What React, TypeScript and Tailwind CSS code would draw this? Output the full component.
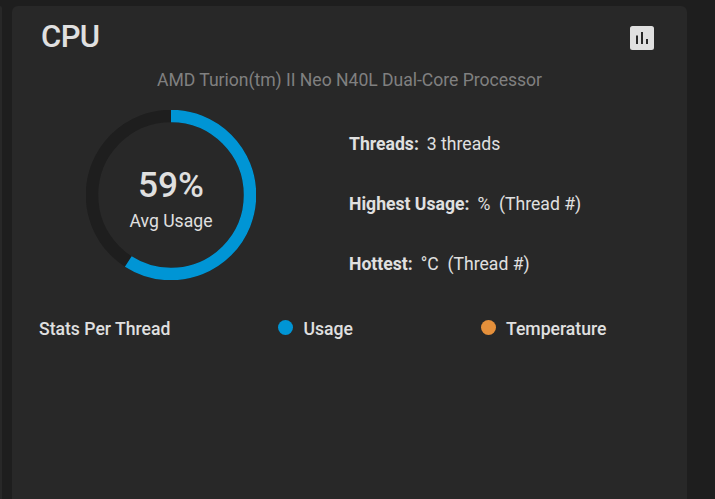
const AVG_USAGE = 59;
const RADIUS = 79;
const CIRCUMFERENCE = 2 * Math.PI * RADIUS;

const STATS = [
  { label: "Threads:", value: "3 threads" },
  { label: "Highest Usage:", value: "%\u00a0 (Thread #)" },
  { label: "Hottest:", value: "°C\u00a0 (Thread #)" },
];

export default function App() {
  return (
    <main className="flex h-screen gap-[10px] overflow-hidden bg-[#1e1e1e] pt-[6px] font-['Roboto',sans-serif] text-[#e0e0e0]">
      {/* Edge of the neighbouring card */}
      <div className="h-[600px] w-0.5 shrink-0 rounded-tr-sm bg-[#282828]" />
      <section className="h-[600px] w-[675px] shrink-0 rounded-md bg-[#282828]">
        {/* Header */}
        <header className="flex h-[60px] items-center justify-between px-[29px]">
          <h1 className="pt-0.5 text-[31px] leading-[46px] font-medium tracking-[-0.6px]">CPU</h1>
          <svg viewBox="0 0 32 32" className="mt-1 size-8" fill="currentColor" fillRule="evenodd">
            <path d="M6.5 4h19A2.5 2.5 0 0 1 28 6.5v19a2.5 2.5 0 0 1-2.5 2.5h-19A2.5 2.5 0 0 1 4 25.5v-19A2.5 2.5 0 0 1 6.5 4zM10 13.5V22h2v-8.5zM15 10v12h2V10zM20 17v5h2v-5z" />
          </svg>
        </header>
        <p className="text-center text-[17.6px] leading-7 tracking-[-0.03px] text-[#808080]">AMD Turion(tm) II Neo N40L Dual-Core Processor</p>

        {/* Usage ring and figures */}
        <div className="mt-4 flex pl-[74px]">
          <div className="grid size-[170px] place-items-center">
            <svg viewBox="0 0 170 170" className="col-start-1 row-start-1 size-full -rotate-90" fill="none" strokeWidth="12.5">
              <circle cx="85" cy="85" r={RADIUS} stroke="#1e1e1e" />
              <circle
                cx="85"
                cy="85"
                r={RADIUS}
                stroke="#0095d5"
                strokeDasharray={`${(CIRCUMFERENCE * AVG_USAGE) / 100} ${CIRCUMFERENCE}`}
              />
            </svg>
            <div className="col-start-1 row-start-1 pt-[10px] text-center">
              <div className="text-[35.2px] leading-[42px] font-medium">{AVG_USAGE}%</div>
              <div className="text-[17.6px] leading-[30px]">Avg Usage</div>
            </div>
          </div>
          <dl className="ml-[93px] flex flex-col gap-8 pt-5 text-[17.6px] leading-7">
            {STATS.map((stat) => (
              <div key={stat.label} className="flex gap-2">
                <dt className="font-bold">{stat.label}</dt>
                <dd>{stat.value}</dd>
              </div>
            ))}
          </dl>
        </div>

        {/* Legend */}
        <div className="mt-[35px] flex items-center pl-[27px] text-[17.6px] leading-7 font-medium">
          <span className="w-[239px]">Stats Per Thread</span>
          <span className="flex w-[203px] items-center gap-[10.5px]">
            <i className="-mt-[3px] size-[15px] rounded-full bg-[#0095d5]" />
            Usage
          </span>
          <span className="flex items-center gap-[10px]">
            <i className="-mt-[3px] size-[15px] rounded-full bg-[#e5903b]" />
            Temperature
          </span>
        </div>
      </section>
    </main>
  );
}
